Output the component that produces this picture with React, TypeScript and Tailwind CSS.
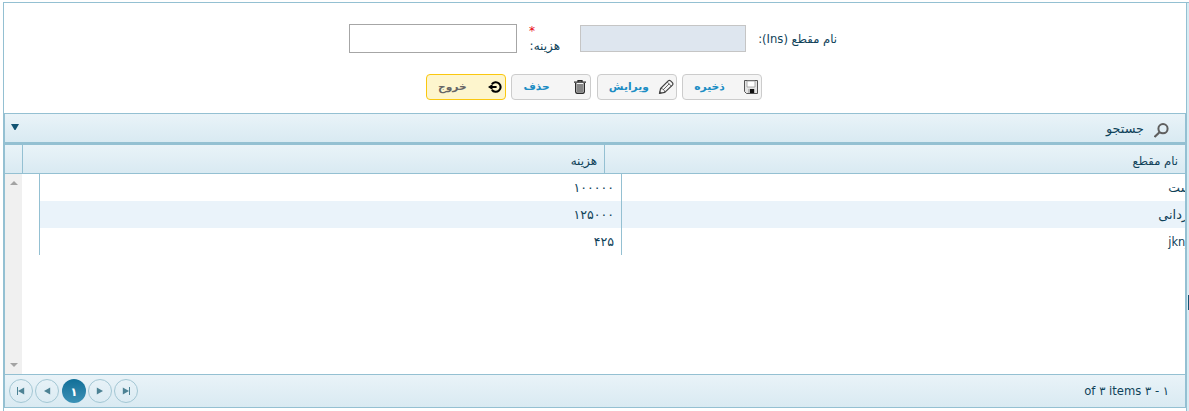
import type { ReactNode } from 'react';

const bar = 'bg-gradient-to-b from-[#e9f3f8] to-[#d9eaf2]';

function ActionButton({ label, icon, active = false }: { label: string; icon: ReactNode; active?: boolean }) {
  const tone = active
    ? 'border-[#fac70f] bg-[#fdf5cd] text-[#666666]'
    : 'border-[#cccccc] bg-[#f5f5f5] text-[#1c8dc4]';
  return (
    <button dir="rtl" className={`flex h-[26px] w-20 items-center rounded-[4px] border pr-[2px] text-[10.7px] font-bold ${tone}`}>
      <span className="flex w-4 shrink-0 justify-center">{icon}</span>
      <span className="flex-1 pl-[11px] text-left leading-4">{label}</span>
    </button>
  );
}

function SaveIcon() {
  return (
    <svg width="14" height="14" viewBox="0 0 14 14">
      <path d="M.5.5h13v13h-11l-2-2z" fill="#e4e4e4" stroke="#555" />
      <path d="M3 1h8v6H3z" fill="#fff" stroke="#999" strokeWidth=".8" />
      <path d="M4 9h7v4H4z" fill="#bbb" />
      <path d="M6 9h4v4H6z" fill="#111" />
    </svg>
  );
}

function PencilIcon() {
  return (
    <svg width="16" height="16" viewBox="0 0 16 16" fill="none" stroke="#444" strokeLinejoin="round">
      <path d="M1.5 14.3 2.6 9.5l7.6-7.6q1.2-1 2.4 0l1.8 1.8q1 1.2 0 2.4L6.8 13.4z" strokeWidth="1.2" />
      <path d="m2.6 9.5 1.9.3 2 2 .3 1.6M5.2 10.8l6-6M9.2 3l4.2 4.2" strokeWidth=".8" />
      <path d="m1.4 14.5 2-.5-1.5-1.5z" fill="#444" strokeWidth=".6" />
    </svg>
  );
}

function TrashIcon() {
  return (
    <svg width="12" height="14" viewBox="0 0 12 14" fill="none" stroke="#2a2a2a">
      <path d="M0 2.2h12M4 2V.6h4V2" strokeWidth="1.3" />
      <path d="M1.7 3v8.8q0 1.4 1.2 1.4h6.2q1.2 0 1.2-1.4V3" strokeWidth="1.4" />
      <path d="M4 4v8M6 4v8M8 4v8" strokeWidth="1.1" />
    </svg>
  );
}

function ExitIcon() {
  return (
    <svg width="14" height="12" viewBox="0 0 14 12" fill="none" stroke="#000" className="mr-px">
      <path d="M3.9 3.2A4.8 4.8 0 1 1 3.9 8.8" strokeWidth="2.1" />
      <path d="M3 6h5.6" strokeWidth="2" />
      <path d="M0 6l4.5-3v6z" fill="#000" stroke="none" />
    </svg>
  );
}

function PageArrow({ kind }: { kind: 'first' | 'prev' | 'next' | 'last' }) {
  const left = kind === 'first' || kind === 'prev';
  return (
    <button className="flex size-6 items-center justify-center rounded-full border border-[#a3c7d4]">
      <svg width="8" height="8" viewBox="0 0 8 8" fill="#4c8294">
        <path d={left ? 'M7.2.6v6.8L1 4z' : 'M.8.6v6.8L7 4z'} />
        {kind === 'first' && <path d="M0 0h1v8H0z" />}
        {kind === 'last' && <path d="M7 0h1v8H7z" />}
      </svg>
    </button>
  );
}

const rows = [
  { name: 'تست', cost: '۱۰۰۰۰۰', size: 'text-[12.4px]' },
  { name: 'گردانی', cost: '۱۲۵۰۰۰', size: 'text-[12.8px]' },
  { name: 'jknjk', cost: '۴۲۵', size: 'text-[11.4px]' },
];

export default function App() {
  return (
    <div className="flex h-[411px] w-[1189px] overflow-hidden bg-white pl-[3px] pt-[2px] font-['DejaVu_Sans',sans-serif] text-[12px] text-[#0f4259]">
      <main className="flex w-[1184px] shrink-0 flex-col border-x border-t border-[#94c0d2]">
        <form className="h-[110px] shrink-0">
          <div className="flex h-[71px] pl-[345px] pt-[21px]">
            <input aria-label="هزینه" className="h-[29px] w-[168px] border border-[#a6a6a6] bg-white" />
            <label dir="rtl" className="ml-[12px] flex w-[31px] flex-col">
              <span className="h-[13px] text-left text-[12px] leading-[14px] text-red-600">*</span>
              <span className="whitespace-nowrap text-[12px] leading-[18px]">هزینه:</span>
            </label>
            <input aria-label="نام مقطع" disabled className="ml-[20px] mt-px h-[27px] w-[166px] border border-[#c5c5c5] bg-[#dee6ef]" />
            <label dir="rtl" className="ml-[12px] mt-[7px] w-[79px] whitespace-nowrap text-[11.6px] leading-4">نام مقطع (Ins):</label>
          </div>
          <div className="flex gap-[5.4px] pl-[422px]">
            <ActionButton label="خروج" icon={<ExitIcon />} active />
            <ActionButton label="حذف" icon={<TrashIcon />} />
            <ActionButton label="ویرایش" icon={<PencilIcon />} />
            <ActionButton label="ذخیره" icon={<SaveIcon />} />
          </div>
        </form>
        <section className="flex h-[295px] w-[1182px] shrink-0 flex-col border-x border-y border-[#94c0d2]">
          <div className={`flex h-[31px] shrink-0 items-center justify-between border-b-[3px] border-[#94c0d2] pl-[6px] pr-[16px] ${bar}`}>
            <svg width="8" height="6" viewBox="0 0 8 6" className="mb-[3px]"><path d="M0 0h8L4.5 6h-1z" fill="#125473" /></svg>
            <span dir="rtl" className="flex items-center gap-[10px] pt-1">
              <svg width="15" height="15" viewBox="0 0 15 15" fill="none" stroke="#5f5f5f">
                <circle cx="9" cy="5.7" r="4.6" strokeWidth="2" />
                <path d="m5.5 9.2-5 4.8" strokeWidth="2.2" />
              </svg>
              <span className="pb-[2px] text-[12.8px] leading-4">جستجو</span>
            </span>
          </div>
          <div className={`flex h-[29px] shrink-0 border-b border-[#94c0d2] ${bar}`}>
            <span className="w-[18px] border-r border-[#94c0d2]" />
            <span dir="rtl" className="w-[582px] border-r border-[#94c0d2] pr-[7px] pt-[8px] text-[12px] leading-4">هزینه</span>
            <span dir="rtl" className="flex-1 pr-[7px] pt-[8px] text-[11.6px] leading-4">نام مقطع</span>
          </div>
          <div className="flex h-[200px] shrink-0 overflow-hidden">
            <div className="flex w-[17px] shrink-0 flex-col items-center justify-between bg-[#f0f0f0] py-[7px]">
              <svg width="8" height="4" viewBox="0 0 8 4"><path d="M0 4h8L4 0z" fill="#a3a3a3" /></svg>
              <svg width="8" height="4" viewBox="0 0 8 4"><path d="M0 0h8L4 4z" fill="#a3a3a3" /></svg>
            </div>
            <div className="ml-[17px] w-[1163px] shrink-0">
              {rows.map((row, i) => (
                <div key={row.name} className={`flex h-[27px] leading-[28px] ${i === 1 ? 'bg-[#eaf3fa]' : ''}`}>
                  <span dir="rtl" className="w-[583px] border-x border-[#94c0d2] pr-[7px] text-[12.6px]">{row.cost}</span>
                  <span dir="rtl" className={`flex-1 pr-[7px] ${row.size}`}>{row.name}</span>
                </div>
              ))}
            </div>
          </div>
          <footer className={`flex h-[33px] shrink-0 items-center justify-between border-t border-[#94c0d2] pl-[4px] pr-[16px] ${bar}`}>
            <nav className="flex items-center gap-[2px]">
              <PageArrow kind="first" />
              <PageArrow kind="prev" />
              <span className="ml-px flex size-6 items-center justify-center rounded-full bg-gradient-to-b from-[#0f6f98] to-[#3b91b6] pt-px text-[12px] font-bold text-white">۱</span>
              <PageArrow kind="next" />
              <PageArrow kind="last" />
            </nav>
            <span dir="rtl" className="pt-px text-[11.6px]">۱ - ۳ of ۳ items</span>
          </footer>
        </section>
      </main>
      <aside className="flex-1 border-t border-[#94c0d2] bg-[#d9ecf3] pl-px pt-[292px]">
        <div className="h-[15px] bg-[#125473]" />
      </aside>
    </div>
  );
}
